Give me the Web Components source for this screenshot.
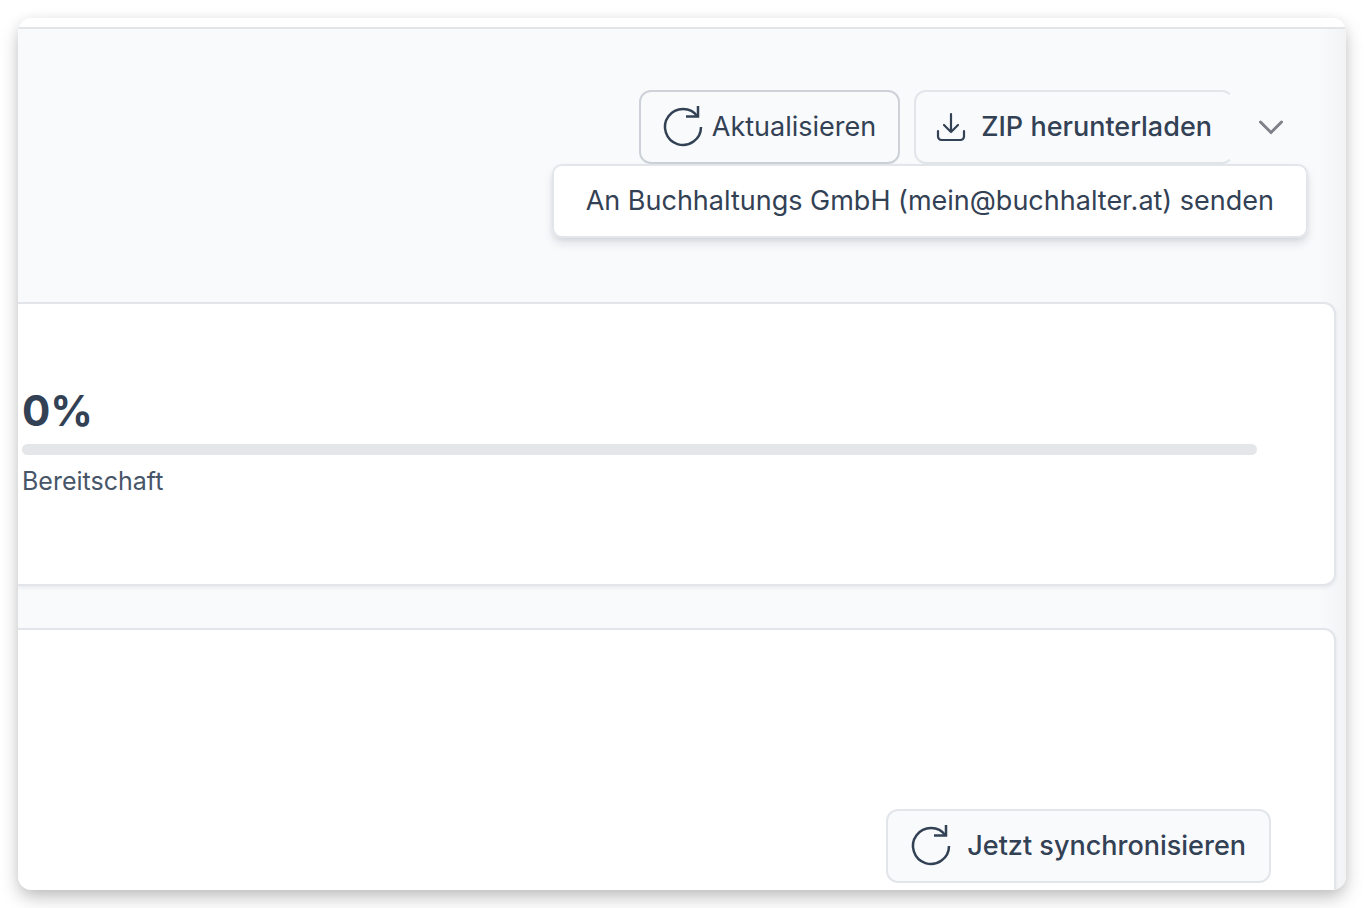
<!DOCTYPE html>
<html lang="de">
<head>
<meta charset="utf-8">
<meta name="viewport" content="width=device-width, initial-scale=1">
<title>Buchhaltung</title>
<style>
  body { margin: 0; background: #fff; color: #334155; font-family: Inter, "Liberation Sans", sans-serif; }
</style>
</head>
<body>
<app-window>
  <page-toolbar>
    <action-button variant="outline" icon="refresh">Aktualisieren</action-button>
    <split-button>
      ZIP herunterladen
      <span slot="option">An Buchhaltungs GmbH (mein@buchhalter.at) senden</span>
    </split-button>
  </page-toolbar>
  <panel-card>
    <progress-stat value="0">Bereitschaft</progress-stat>
  </panel-card>
  <panel-card variant="actions">
    <action-button variant="soft" icon="refresh">Jetzt synchronisieren</action-button>
  </panel-card>
</app-window>

<script>
const icons = {
  refresh: `<svg viewBox="0 0 40 40" width="40" height="40" fill="none" stroke="currentColor" stroke-width="2.500" aria-hidden="true">
    <path d="M38 20A18 18 0 1 1 34.700 9.600"/><path d="M35 -1V9.600H23"/></svg>`,
  download: `<svg viewBox="0 0 30 30" width="30" height="30" fill="none" stroke="currentColor" stroke-width="2.200" stroke-linecap="round" stroke-linejoin="round" aria-hidden="true">
    <path d="M15 2v18M8 13l7 7 7-7"/><path d="M2 19v5.500a3.500 3.500 0 0 0 3.500 3.500h19a3.500 3.500 0 0 0 3.500-3.500V19"/></svg>`,
  chevron: `<svg viewBox="0 0 26 16" width="26" height="16" fill="none" stroke="currentColor" stroke-width="3" stroke-linecap="round" aria-hidden="true">
    <path d="M2.500 3L13 13.500L23.500 3"/></svg>`
};

const buttonStyles = `
  button {
    box-sizing: border-box; display: flex; align-items: center; height: 74px; margin: 0;
    border: 2px solid #e2e6ea; border-radius: 12px; background: #f9fafc;
    color: #334155; font: 400 27px/36px Inter, "Liberation Sans", sans-serif;
    white-space: nowrap; cursor: pointer;
  }
  svg { display: block; flex: none; overflow: visible; }
`;

function define(name, render) {
  customElements.define(name, class extends HTMLElement {
    connectedCallback() {
      if (this.shadowRoot) return;
      this.attachShadow({ mode: "open" }).innerHTML = render(this);
    }
  });
}

define("app-window", () => `
  <style>
    :host {
      display: block; position: relative; margin: 18px; overflow: hidden;
      border-radius: 14px; background: #f9fafc;
      box-shadow: 0 8px 18px -1px rgba(0,0,0,.25), 0 0 12px rgba(0,0,0,.04);
    }
    header { height: 9px; background: #fff; border-bottom: 2px solid #e2e5e8; }
    main { display: flex; flex-direction: column; gap: 42px; padding-right: 10px;
      background: linear-gradient(to left, #f2f3f5, #f9fafc 26px); }
  </style>
  <header></header>
  <main><slot></slot></main>`);

define("page-toolbar", () => `
  <style>
    :host { display: flex; justify-content: flex-end; gap: 14px; padding: 61px 28px 96px 0; }
  </style>
  <slot></slot>`);

define("action-button", el => `
  <style>
    ${buttonStyles}
    :host { display: block; }
    button { gap: 9px; padding: 0 22px; }
    :host([variant="outline"]) button { border-color: #cdd1d8; }
    :host([variant="soft"]) button { gap: 16px; padding: 0 23px; font-weight: 500; }
  </style>
  <button type="button">${icons[el.getAttribute("icon")]}<slot></slot></button>`);

define("split-button", () => `
  <style>
    ${buttonStyles}
    :host { display: flex; position: relative; }
    .main { gap: 15px; padding: 0 20px; border-right-color: transparent; font-weight: 500; }
    .toggle { width: 74px; justify-content: center; padding: 0; border-color: transparent; background: none; color: #7d8188; }
    .menu { position: absolute; z-index: 1; top: 100%; right: 0; border-radius: 10px;
      box-shadow: 0 6px 10px rgba(15,23,42,.1), 0 2px 4px rgba(15,23,42,.06); }
    .menu button { padding: 0 32px; border-radius: 10px; background: #fff; }
  </style>
  <button class="main" type="button">${icons.download}<slot></slot></button>
  <button class="toggle" type="button" aria-label="Weitere Optionen" aria-expanded="true">${icons.chevron}</button>
  <div class="menu" role="menu"><button type="button" role="menuitem"><slot name="option"></slot></button></div>`);

define("panel-card", () => `
  <style>
    :host {
      display: block; border: 2px solid #e2e5e9; border-left: 0; border-radius: 0 12px 12px 0;
      background: #fff; padding: 82px 77px 85px 4px; box-shadow: 0 2px 4px rgba(15,23,42,.07);
    }
    :host([variant="actions"]) {
      display: flex; justify-content: flex-end; padding: 179px 63px 7px 0;
      border-bottom: 0; border-radius: 0 12px 0 0;
    }
  </style>
  <slot></slot>`);

define("progress-stat", el => `
  <style>
    :host { display: block; }
    .value { font-size: 42px; line-height: 50px; font-weight: 700; }
    .track { height: 11px; margin: 8px 0; border-radius: 6px; background: #e5e6e9; overflow: hidden; }
    .fill { height: 100%; width: ${el.getAttribute("value")}%; background: #334155; }
    .label { font-size: 25px; line-height: 36px; color: #475569; }
  </style>
  <div class="value">${el.getAttribute("value")}%</div>
  <div class="track" role="progressbar" aria-label="Bereitschaft" aria-valuemin="0" aria-valuemax="100" aria-valuenow="${el.getAttribute("value")}"><div class="fill"></div></div>
  <div class="label"><slot></slot></div>`);
</script>
</body>
</html>
